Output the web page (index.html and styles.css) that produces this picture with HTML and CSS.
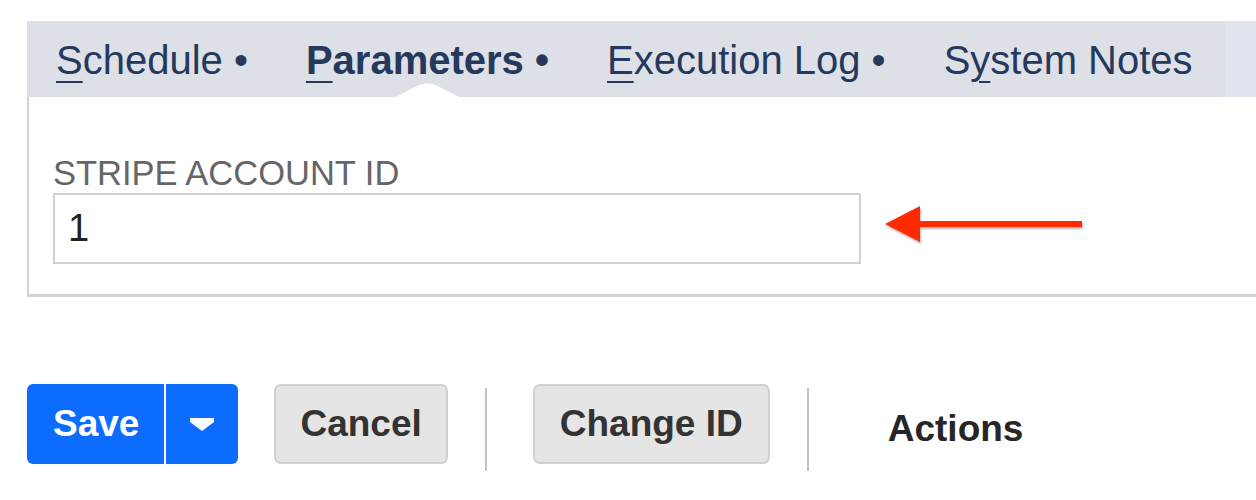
FILE: index.html
```html
<!DOCTYPE html>
<html lang="en">
<head>
<meta charset="utf-8">
<title>Parameters</title>
<link rel="stylesheet" href="styles.css">
</head>
<body>
<div class="page">
  <nav class="tabs">
    <div class="tab"><u>S</u>chedule •</div>
    <div class="tab tab-active"><u>P</u>arameters •<span class="notch"></span></div>
    <div class="tab"><u>E</u>xecution Log •</div>
    <div class="tab">S<u>y</u>stem Notes</div>
    <div class="tabs-end"></div>
  </nav>
  <section class="panel">
    <div class="field-label">STRIPE ACCOUNT ID</div>
    <div class="field-row">
      <div class="field-input">1</div>
      <svg class="arrow" width="204" height="71" viewBox="0 0 204 71">
        <g class="arrow-shape">
          <rect x="34" y="28" width="165" height="6" fill="#ff2a00"/>
          <polygon points="2,31 37,13 37,49" fill="#ff2a00"/>
        </g>
      </svg>
    </div>
  </section>
  <div class="actions">
    <div class="btn-split">
      <div class="btn-save">Save</div>
      <div class="btn-caret">
        <svg width="24" height="15" viewBox="0 0 24 15"><polygon points="0,1 24,1 24,5 12,14 0,5" fill="#fff"/></svg>
      </div>
    </div>
    <div class="btn btn-cancel">Cancel</div>
    <div class="sep sep-1"></div>
    <div class="btn btn-change">Change ID</div>
    <div class="sep sep-2"></div>
    <div class="actions-menu">Actions</div>
  </div>
</div>
</body>
</html>
```

FILE: styles.css
```css
html, body {
  margin: 0;
  padding: 0;
  background: #ffffff;
}

body {
  font-family: "Liberation Sans", Arial, Helvetica, sans-serif;
  width: 1256px;
  overflow: hidden;
}

.page {
  padding: 21px 0 0 27px;
}

/* Tabs */
.tabs {
  display: flex;
  height: 76px;
  background: #dde0e7;
}

.tab {
  position: relative;
  padding: 5px 29px 0;
  line-height: 68px;
  font-size: 40px;
  color: #25395c;
  white-space: nowrap;
}

.tab u {
  text-decoration-thickness: 2px;
  text-underline-offset: 7px;
}

.tab-active {
  font-weight: bold;
}

.notch {
  position: absolute;
  left: 50%;
  bottom: 0;
  width: 64px;
  height: 14px;
  margin-left: -32px;
  background: #ffffff;
  clip-path: polygon(0 100%, 38% 12%, 50% 0, 62% 12%, 100% 100%);
}

.tabs-end {
  margin-left: auto;
  width: 31px;
  background: #e1e6ee;
}

/* Panel */
.panel {
  border-left: 2px solid #d2d2d2;
  border-bottom: 3px solid #d4d4d4;
  padding: 57px 0 30px 24px;
}

.field-label {
  font-size: 34.5px;
  line-height: 38px;
  color: #666666;
  margin-bottom: 1px;
}

.field-row {
  display: flex;
  align-items: stretch;
}

.field-input {
  box-sizing: border-box;
  width: 808px;
  height: 71px;
  border: 2px solid #d0d0d0;
  padding-left: 13px;
  font-size: 38px;
  line-height: 67px;
  color: #222222;
}

.arrow {
  margin-left: 22px;
  display: block;
}

.arrow-shape {
  filter: drop-shadow(1px 2px 1px rgba(0, 0, 0, 0.3));
}

/* Action buttons */
.actions {
  display: flex;
  align-items: flex-start;
  margin-top: 87px;
}

.btn-split {
  display: flex;
  height: 80px;
  background: #0b6cff;
  border-radius: 6px;
  overflow: hidden;
}

.btn-save {
  padding: 0 25px 0 26px;
  border-right: 2px solid #ffffff;
  font-size: 37px;
  font-weight: bold;
  line-height: 80px;
  color: #ffffff;
}

.btn-caret {
  width: 72px;
  display: flex;
  align-items: center;
  justify-content: center;
}

.btn {
  box-sizing: border-box;
  height: 80px;
  padding: 0 24px;
  border: 2px solid #d0d0d0;
  border-radius: 7px;
  background: #e5e5e5;
  font-size: 37px;
  font-weight: bold;
  line-height: 76px;
  color: #333333;
  white-space: nowrap;
}

.btn-cancel {
  margin-left: 36px;
}

.sep {
  width: 2px;
  height: 83px;
  background: #c4c4c4;
  margin-top: 4px;
}

.sep-1 {
  margin-left: 37px;
}

.btn-change {
  margin-left: 46px;
  padding: 0 25px;
}

.sep-2 {
  margin-left: 37px;
}

.actions-menu {
  margin-left: 79px;
  margin-top: 5px;
  font-size: 37px;
  font-weight: bold;
  line-height: 80px;
  color: #262626;
}
```
